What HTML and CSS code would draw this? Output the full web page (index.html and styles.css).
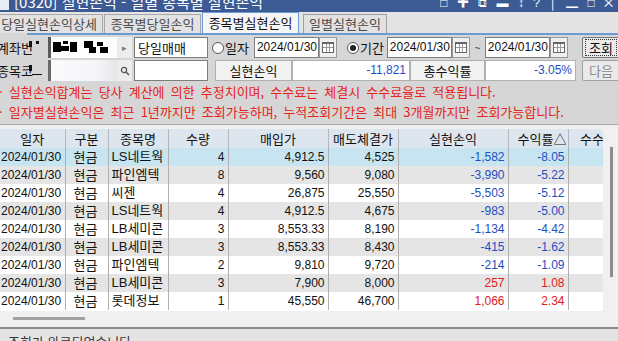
FILE: index.html
```html
<!DOCTYPE html>
<html lang="ko">
  <head>
    <meta charset="UTF-8" />
    <title>[0320] 실현손익</title>
    <link rel="stylesheet" href="styles.css">
  </head>
  <body>
    <div class="titlebar">
      <span class="app-icon"></span>
      <span class="title">[0320] 실현손익 - 일별 종목별 실현손익</span>
      <span class="win-tools">□ ✚ ⧉ ▬ ↕ ? │ ▁ □ ✕</span>
    </div>

    <div class="tabs">
      <div class="tab first">당일실현손익상세</div>
      <div class="tab">종목별당일손익</div>
      <div class="tab active">종목별실현손익</div>
      <div class="tab">일별실현손익</div>
    </div>
    <div class="tab-line"></div>

    <div class="form">
      <div class="row">
        <div class="label">계좌번<i class="mark m1"></i><i class="mark m2"></i></div>
        <div class="masked">
          <svg width="66" height="21" viewBox="0 0 66 21">
            <rect x="2" y="5" width="8" height="10" fill="#000"/>
            <rect x="10" y="9" width="8" height="5" fill="#000"/>
            <rect x="12" y="4" width="5" height="3" fill="#000"/>
            <rect x="19" y="5" width="7" height="10" fill="#000"/>
            <rect x="33" y="4" width="9" height="7" fill="#000"/>
            <rect x="38" y="10" width="7" height="6" fill="#000"/>
            <rect x="46" y="5" width="6" height="4" fill="#000"/>
            <rect x="49" y="10" width="8" height="6" fill="#000"/>
          </svg>
        </div>
        <div class="sbtn">▸</div>
        <div class="input w74">당일매매</div>
        <div class="radio"><span class="dot"></span>일자</div>
        <div class="date">2024/01/30</div><div class="cal"><i></i></div>
        <div class="radio on"><span class="dot"></span>기간</div>
        <div class="date">2024/01/30</div><div class="cal"><i></i></div>
        <span class="tilde">~</span>
        <div class="date">2024/01/30</div><div class="cal"><i></i></div>
        <div class="btn focus"><span>조회</span></div>
      </div>
      <div class="row">
        <div class="label">종목코<i class="mark m3"></i><i class="mark m4"></i></div>
        <div class="masked blur"></div>
        <div class="sbtn">
          <svg width="10" height="10" viewBox="0 0 10 10"><circle cx="4" cy="4" r="2.6" fill="none" stroke="#555" stroke-width="1.2"/><line x1="6" y1="6" x2="9" y2="9" stroke="#555" stroke-width="1.4"/></svg>
        </div>
        <div class="input w74"></div>
        <div class="sum-label l1">실현손익</div>
        <div class="sum-val v1">-11,821</div>
        <div class="sum-label l2">총수익률</div>
        <div class="sum-val v2">-3.05%</div>
        <div class="btn off">다음</div>
      </div>
    </div>

    <div class="notice">
      <p>· 실현손익합계는 당사 계산에 의한 추정치이며, 수수료는 체결시 수수료율로 적용됩니다.</p>
      <p>· 일자별실현손익은 최근 1년까지만 조회가능하며, 누적조회기간은 최대 3개월까지만 조회가능합니다.</p>
    </div>

    <div class="panel">
      <div class="grid">
        <table>
          <colgroup>
            <col style="width:65px"><col style="width:43px"><col style="width:60px"><col style="width:60px"><col style="width:100px"><col style="width:70px"><col style="width:110px"><col style="width:60px"><col style="width:60px">
          </colgroup>
          <thead>
            <tr><th>일자</th><th>구분</th><th>종목명</th><th>수량</th><th>매입가</th><th>매도체결가</th><th>실현손익</th><th class="sort">수익률△</th><th>수수료</th></tr>
          </thead>
          <tbody>
            <tr class="sel"><td>2024/01/30</td><td class="c">현금</td><td class="l">LS네트웍</td><td class="r">4</td><td class="r">4,912.5</td><td class="r">4,525</td><td class="r blue">-1,582</td><td class="r blue">-8.05</td><td></td></tr>
            <tr class="alt"><td>2024/01/30</td><td class="c">현금</td><td class="l">파인엠텍</td><td class="r">8</td><td class="r">9,560</td><td class="r">9,080</td><td class="r blue">-3,990</td><td class="r blue">-5.22</td><td></td></tr>
            <tr><td>2024/01/30</td><td class="c">현금</td><td class="l">씨젠</td><td class="r">4</td><td class="r">26,875</td><td class="r">25,550</td><td class="r blue">-5,503</td><td class="r blue">-5.12</td><td></td></tr>
            <tr class="alt"><td>2024/01/30</td><td class="c">현금</td><td class="l">LS네트웍</td><td class="r">4</td><td class="r">4,912.5</td><td class="r">4,675</td><td class="r blue">-983</td><td class="r blue">-5.00</td><td></td></tr>
            <tr><td>2024/01/30</td><td class="c">현금</td><td class="l">LB세미콘</td><td class="r">3</td><td class="r">8,553.33</td><td class="r">8,190</td><td class="r blue">-1,134</td><td class="r blue">-4.42</td><td></td></tr>
            <tr class="alt"><td>2024/01/30</td><td class="c">현금</td><td class="l">LB세미콘</td><td class="r">3</td><td class="r">8,553.33</td><td class="r">8,430</td><td class="r blue">-415</td><td class="r blue">-1.62</td><td></td></tr>
            <tr><td>2024/01/30</td><td class="c">현금</td><td class="l">파인엠텍</td><td class="r">2</td><td class="r">9,810</td><td class="r">9,720</td><td class="r blue">-214</td><td class="r blue">-1.09</td><td></td></tr>
            <tr class="alt"><td>2024/01/30</td><td class="c">현금</td><td class="l">LB세미콘</td><td class="r">3</td><td class="r">7,900</td><td class="r">8,000</td><td class="r red">257</td><td class="r red">1.08</td><td></td></tr>
            <tr><td>2024/01/30</td><td class="c">현금</td><td class="l">롯데정보</td><td class="r">1</td><td class="r">45,550</td><td class="r">46,700</td><td class="r red">1,066</td><td class="r red">2.34</td><td></td></tr>
          </tbody>
        </table>
        <div class="vscroll"></div>
      </div>
      <div class="hscroll"><div class="thumb"></div></div>
    </div>

    <div class="status">조회가 완료되었습니다.</div>
  </body>
</html>
```

FILE: styles.css
```css
body {
  margin: 0;
  width: 618px;
  height: 341px;
  overflow: hidden;
  background-color: #d6d6d6;
  font-family: "Liberation Sans", "Noto Sans CJK KR", sans-serif;
  font-size: 12px;
  color: #111;
}
.titlebar {
  height: 12px;
  background-color: #3c5a94;
  color: #fff;
  display: flex;
  align-items: flex-end;
  overflow: hidden;
}
.app-icon {
  width: 9px;
  height: 10px;
  background-color: #e8ecf4;
  margin-bottom: 2px;
}
.title {
  margin-left: 5px;
  font-family: "Noto Sans CJK KR", sans-serif;
  font-size: 15px;
  line-height: 15px;
  margin-bottom: 3px;
  white-space: nowrap;
}
.win-tools {
  margin-left: auto;
  margin-right: 2px;
  font-size: 12px;
  line-height: 12px;
  margin-bottom: 3px;
  letter-spacing: 3px;
  white-space: nowrap;
}
.tabs {
  display: flex;
  height: 21px;
  background-color: #e4e4e4;
  align-items: flex-end;
  gap: 1px;
}
.tab {
  height: 19px;
  box-sizing: border-box;
  border: 1px solid #a8a8a8;
  border-bottom: none;
  background-color: #e2e2e2;
  color: #4a4a4a;
  font-family: "Noto Sans CJK KR", sans-serif;
  font-size: 13px;
  line-height: 17px;
  text-align: center;
  white-space: nowrap;
}
.tab.first {
  width: 108px;
  margin-left: -5px;
}
.tab:nth-child(2) {
  width: 97px;
}
.tab.active {
  width: 97px;
  height: 21px;
  line-height: 19px;
  background-color: #f6f6f6;
  border-color: #6b9bd6;
  color: #111;
}
.tab:nth-child(4) {
  width: 84px;
  margin-left: 3px;
  border-color: #9e9e9e;
}
.tab-line {
  height: 2px;
  margin-left: 27px;
  background-color: #6b9bd6;
}
.form {
  padding-top: 2px;
}
.row {
  display: flex;
  align-items: center;
  height: 21px;
  margin-bottom: 2px;
}
.label {
  width: 51px;
  margin-left: -3px;
  font-family: "Noto Sans CJK KR", sans-serif;
  font-size: 13px;
  white-space: nowrap;
  overflow: hidden;
  position: relative;
  height: 21px;
  line-height: 21px;
}
.mark {
  position: absolute;
  background-color: #111;
}
.m1 { left: 32px; top: 4px; width: 3px; height: 6px; }
.m2 { left: 39px; top: 4px; width: 3px; height: 3px; }
.m3 { left: 32px; top: 5px; width: 3px; height: 6px; }
.m4 { left: 35px; top: 14px; width: 10px; height: 1px; }
.masked {
  width: 66px;
  height: 21px;
  background-color: #fdfdfd;
  border-left: 3px solid #5a5a5a;
}
.masked svg {
  display: block;
}
.masked.blur {
  background: linear-gradient(90deg, #fbfbfd 0%, #f4f5f8 70%, #e6e6e8 100%);
  border-left-color: #6a6a6a;
}
.sbtn {
  width: 15px;
  height: 21px;
  background-color: #ececec;
  color: #777;
  font-size: 9px;
  display: flex;
  align-items: center;
  justify-content: center;
  margin-right: 2px;
}
.input {
  height: 21px;
  box-sizing: border-box;
  border: 1px solid #7d7d7d;
  background-color: #fff;
  font-family: "Noto Sans CJK KR", sans-serif;
  font-size: 13px;
  line-height: 19px;
  padding-left: 3px;
}
.w74 {
  width: 74px;
}
.radio {
  display: flex;
  align-items: center;
  font-family: "Noto Sans CJK KR", sans-serif;
  font-size: 13px;
  margin-left: 4px;
  margin-right: 5px;
}
.radio .dot {
  width: 10px;
  height: 10px;
  border: 1px solid #555;
  border-radius: 50%;
  background-color: #fff;
  margin-right: 1px;
  position: relative;
}
.radio.on .dot::after {
  content: "";
  position: absolute;
  left: 2px;
  top: 2px;
  width: 6px;
  height: 6px;
  border-radius: 50%;
  background-color: #222;
}
.radio.on {
  margin-left: 10px;
  margin-right: 3px;
}
.date {
  width: 65px;
  height: 21px;
  box-sizing: border-box;
  border: 1px solid #7d7d7d;
  background-color: #fff;
  font-size: 12px;
  line-height: 19px;
  padding-left: 2px;
}
.cal {
  width: 18px;
  height: 21px;
  box-sizing: border-box;
  border: 1px solid #9a9a9a;
  background-color: #efefef;
  display: flex;
  align-items: center;
  justify-content: center;
}
.cal i {
  width: 10px;
  height: 8px;
  border: 1px solid #666;
  border-top-width: 2px;
  background:
    linear-gradient(#999, #999) 0 3px / 100% 1px no-repeat,
    linear-gradient(#999, #999) 3px 0 / 1px 100% no-repeat,
    linear-gradient(#999, #999) 6px 0 / 1px 100% no-repeat,
    #fff;
}
.tilde {
  width: 15px;
  text-align: center;
  font-size: 11px;
  color: #444;
}
.btn {
  margin-left: auto;
  width: 38px;
  height: 21px;
  box-sizing: border-box;
  border: 1px solid #7a7a7a;
  border-radius: 2px;
  background-color: #eaeaea;
  font-family: "Noto Sans CJK KR", sans-serif;
  font-size: 13px;
  display: flex;
  align-items: center;
  justify-content: center;
  margin-right: -2px;
}
.btn.focus span {
  border: 1px dotted #333;
  padding: 0 3px;
  line-height: 15px;
}
.btn.off {
  color: #8a8a8a;
  border-color: #a0a0a0;
  margin-left: 6px;
}
.sum-label {
  height: 21px;
  box-sizing: border-box;
  border: 1px solid #b0b0b0;
  background-color: #f2f2f2;
  font-family: "Noto Sans CJK KR", sans-serif;
  font-size: 13px;
  line-height: 19px;
  text-align: center;
}
.l1 {
  width: 77px;
  margin-left: 7px;
}
.l2 {
  width: 75px;
}
.sum-val {
  height: 21px;
  box-sizing: border-box;
  border: 1px solid #b0b0b0;
  background-color: #fff;
  color: #1d4fc2;
  text-align: right;
  line-height: 19px;
  padding-right: 3px;
  font-size: 12px;
}
.v1 {
  width: 118px;
}
.v2 {
  width: 91px;
}
.notice {
  color: #e5231b;
  font-family: "Noto Sans CJK KR", sans-serif;
  font-size: 13px;
  word-spacing: 2.5px;
  margin-left: -1px;
  margin-top: -1px;
}
.notice p {
  margin: 0;
  height: 20px;
  line-height: 20px;
  white-space: nowrap;
}
.panel {
  margin-top: 2px;
  border-top: 1px solid #a8a8a8;
  background-color: #f0f0f0;
  padding-top: 4px;
  position: relative;
}
.grid {
  width: 603px;
  height: 182px;
  overflow: hidden;
  background-color: #fff;
}
table {
  width: 628px;
  table-layout: fixed;
  border-collapse: collapse;
}
th {
  height: 18px;
  padding: 0;
  background-color: #dde5ee;
  border-right: 1px solid #b4b8bc;
  font-family: "Noto Sans CJK KR", sans-serif;
  font-size: 13px;
  font-weight: normal;
  white-space: nowrap;
  overflow: hidden;
}
th.sort {
  text-align: right;
  padding-right: 1px;
}
td {
  height: 18px;
  padding: 0 3px 0 1px;
  border-right: 1px solid #b0b0b0;
  white-space: nowrap;
  overflow: hidden;
  font-size: 12px;
  line-height: 18px;
}
td.c {
  text-align: center;
  font-family: "Noto Sans CJK KR", sans-serif;
  font-size: 13px;
}
td.l {
  padding-left: 3px;
  font-size: 13px;
}
td.r {
  text-align: right;
}
tr.sel td {
  background-color: #c7e5f1;
}
tr.alt td {
  background-color: #e5e5e5;
}
.blue {
  color: #1d4fc2;
}
.red {
  color: #e0201a;
}
.vscroll {
  position: absolute;
  left: 610px;
  top: 22px;
  width: 3px;
  height: 130px;
  background-color: #8c8c8c;
}
.hscroll {
  height: 16px;
  position: relative;
}
.thumb {
  position: absolute;
  left: 13px;
  top: 6px;
  width: 72px;
  height: 3px;
  background-color: #a0a0a0;
}
.status {
  border-top: 2px solid #8a8a8a;
  background-color: #e4e4e4;
  height: 20px;
  padding-left: 8px;
  font-family: "Noto Sans CJK KR", sans-serif;
  font-size: 13px;
  line-height: 26px;
  color: #333;
}
```
